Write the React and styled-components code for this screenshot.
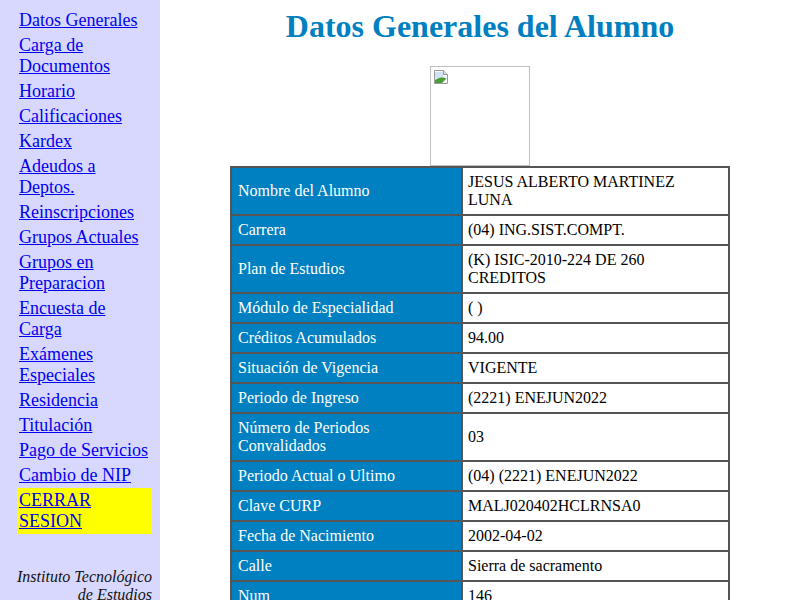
import styled, { createGlobalStyle } from 'styled-components'

const GlobalStyle = createGlobalStyle`
  html, body {
    margin: 0;
    padding: 0;
    height: 100%;
    overflow: hidden;
    background: #ffffff;
  }
  body {
    font-family: "Liberation Serif", "Times New Roman", serif;
    font-size: 16px;
  }
`

const menu = [
  'Datos Generales',
  'Carga de Documentos',
  'Horario',
  'Calificaciones',
  'Kardex',
  'Adeudos a Deptos.',
  'Reinscripciones',
  'Grupos Actuales',
  'Grupos en Preparacion',
  'Encuesta de Carga',
  'Exámenes Especiales',
  'Residencia',
  'Titulación',
  'Pago de Servicios',
  'Cambio de NIP',
]

const datos = [
  ['Nombre del Alumno', 'JESUS ALBERTO MARTINEZ LUNA'],
  ['Carrera', '(04) ING.SIST.COMPT.'],
  ['Plan de Estudios', '(K) ISIC-2010-224 DE 260 CREDITOS'],
  ['Módulo de Especialidad', '( )'],
  ['Créditos Acumulados', '94.00'],
  ['Situación de Vigencia', 'VIGENTE'],
  ['Periodo de Ingreso', '(2221) ENEJUN2022'],
  ['Número de Periodos Convalidados', '03'],
  ['Periodo Actual o Ultimo', '(04) (2221) ENEJUN2022'],
  ['Clave CURP', 'MALJ020402HCLRNSA0'],
  ['Fecha de Nacimiento', '2002-04-02'],
  ['Calle', 'Sierra de sacramento'],
  ['Num', '146'],
  ['Colonia', 'Centro'],
  ['Código Postal', '00000'],
]

const BrokenIcon = () => (
  <svg width="16" height="16" viewBox="0 0 16 16">
    <path d="M1.5 1.5h9l4 4v9h-13z" fill="#f4f7fa" stroke="#9a9a9a" />
    <path d="M10.5 1.5v4h4" fill="#e0e0e0" stroke="#9a9a9a" />
    <path d="M2 3h8v6H2z" fill="#cfe3f5" />
    <path d="M2 14V11c3-2 6-3 10-2l2 1v4z" fill="#4a9e3a" />
    <path d="M9 14l5-5v5z" fill="#ffffff" />
  </svg>
)

export default function App() {
  return (
    <>
      <GlobalStyle />
      <Frames>
        <Sidebar>
          <Menu>
            {menu.map(item => (
              <MenuItem key={item}>
                <MenuLink href="#">{item}</MenuLink>
              </MenuItem>
            ))}
            <MenuItem $logout>
              <MenuLink href="#">CERRAR SESION</MenuLink>
            </MenuItem>
          </Menu>
          <Institute>Instituto Tecnológico de Estudios Superiores</Institute>
        </Sidebar>
        <Main>
          <Title>Datos Generales del Alumno</Title>
          <Photo>
            <BrokenIcon />
          </Photo>
          <DataTable>
            <tbody>
              {datos.map(([label, value]) => (
                <tr key={label}>
                  <Label>{label}</Label>
                  <Value>{value}</Value>
                </tr>
              ))}
            </tbody>
          </DataTable>
        </Main>
      </Frames>
    </>
  )
}

const Frames = styled.div`
  display: flex;
  height: 100vh;
  overflow: hidden;
`

const Sidebar = styled.nav`
  width: 160px;
  flex-shrink: 0;
  box-sizing: border-box;
  background: #d8d8ff;
  padding: 8px 8px 0 17px;
  overflow: hidden;
`

const Menu = styled.ul`
  list-style: none;
  margin: 0;
  padding: 0;
  width: 135px;
`

const MenuItem = styled.li`
  padding: 2px;
  font-size: 18px;
  line-height: 21px;
  background: ${p => (p.$logout ? '#ffff00' : 'transparent')};
`

const MenuLink = styled.a`
  color: #0000ee;
  text-decoration: underline;
`

const Institute = styled.p`
  width: 135px;
  margin: 34px 0 0;
  text-align: right;
  font-style: italic;
  font-size: 16px;
  line-height: 18px;
  color: #111;
`

const Main = styled.main`
  flex: 1;
  padding: 8px;
  overflow: hidden;
`

const Title = styled.h1`
  margin: 0 0 21px;
  text-align: center;
  font-size: 32px;
  font-weight: bold;
  color: #0080c0;
`

const Photo = styled.div`
  width: 100px;
  height: 100px;
  box-sizing: border-box;
  margin: 0 auto;
  border: 1px solid #c0c0c0;
  padding: 2px;
  display: flex;
  align-items: flex-start;
`

const DataTable = styled.table`
  width: 500px;
  box-sizing: border-box;
  margin: 0 auto;
  border: 1px solid #555;
  border-spacing: 0;
  font-size: 16px;
  line-height: 18px;

  td {
    border: 1px solid #555;
    vertical-align: middle;
  }
`

const Label = styled.td`
  width: 231px;
  box-sizing: border-box;
  padding: 5px 5px 5px 6px;
  background: #0080c0;
  color: #ffffff;
`

const Value = styled.td`
  padding: 5px 9px 5px 5px;
  background: #ffffff;
  color: #000000;
`
